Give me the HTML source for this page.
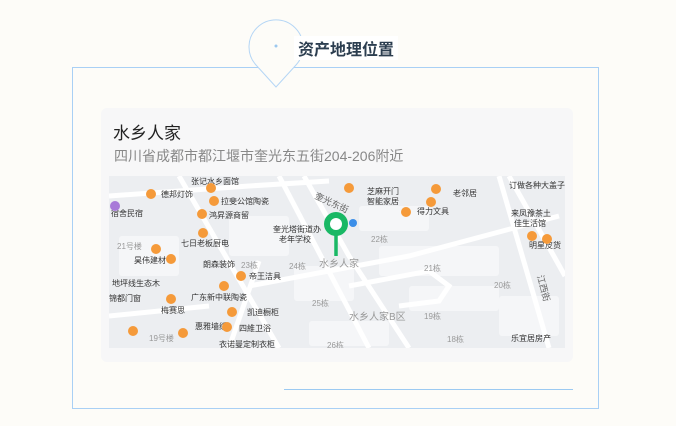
<!DOCTYPE html>
<html><head><meta charset="utf-8"><style>
body{margin:0;width:676px;height:426px;background:#fdfcf8;font-family:"Liberation Sans","Noto Sans CJK SC",sans-serif;position:relative;overflow:hidden}
.box{position:absolute;left:72px;top:67px;width:527px;height:342px;border:1px solid #a9d0f5;box-sizing:border-box}
.card{position:absolute;left:101px;top:108px;width:472px;height:254px;background:#f7f7f8;border-radius:6px}
.t{position:absolute;left:113px;top:119px;font-size:17px;color:#222}
.a{position:absolute;left:114px;top:146px;font-size:14px;color:#888}
.hd{position:absolute;left:294px;top:36px;font-size:16px;font-weight:bold;color:#2c3e50;background:#fff;padding:0 4px}
.bl{position:absolute;left:284px;top:389px;width:289px;height:1px;background:#9ccaf2}
svg text{font-family:"Liberation Sans","Noto Sans CJK SC",sans-serif}
</style></head><body>
<div class="box"></div>
<svg style="position:absolute;left:246px;top:16px" width="62" height="74">
<path d="M30 71 L10 49 A27 27 0 1 1 50 49 Z" fill="#fdfcf8" stroke="#b5d6f5" stroke-width="1"/>
<circle cx="30" cy="30" r="1.5" fill="#9cc8ef"/>
</svg>
<div class="hd">资产地理位置</div>
<div class="card"></div>
<div class="t">水乡人家</div>
<div class="a">四川省成都市都江堰市奎光东五街204-206附近</div>
<svg style="position:absolute;left:109px;top:176px" width="456" height="172" viewBox="0 0 456 172">
<rect width="456" height="172" fill="#eceef1"/>
<g fill="#f5f6f8">
<rect x="120" y="40" width="60" height="40" rx="3"/><rect x="10" y="60" width="60" height="40" rx="3"/>
<rect x="185" y="90" width="60" height="35" rx="3"/><rect x="270" y="70" width="120" height="30" rx="3"/>
<rect x="300" y="110" width="90" height="25" rx="3"/><rect x="200" y="145" width="80" height="25" rx="3"/>
<rect x="390" y="120" width="60" height="40" rx="3"/><rect x="250" y="30" width="70" height="25" rx="3"/>
</g>
<g stroke="#ffffff" fill="none" stroke-width="5">
<path d="M0 20 L140 10 L220 5"/><path d="M70 0 L170 172"/><path d="M170 0 L260 172"/>
<path d="M195 0 L240 80 L300 172"/><path d="M140 110 L300 80 L450 40"/>
<path d="M150 85 L120 172"/><path d="M390 0 L440 172"/><path d="M400 0 L456 100"/>
<path d="M290 130 L330 125 L340 110 L320 95 L240 110"/><path d="M0 140 L100 130"/>
</g>
<g font-size="8" fill="#333">
<text x="52" y="21">德邦灯饰</text><text x="112" y="28">拉斐公馆陶瓷</text><text x="100" y="42">鸿昇源商留</text>
<text x="72" y="70">七日老板厨电</text><text x="25" y="87">昊伟建材</text><text x="94" y="91">朗森装饰</text>
<text x="140" y="103">帝王洁具</text><text x="3" y="110">地坪线生态木</text><text x="0" y="125">锦都门窗</text>
<text x="82" y="124">广东新中联陶瓷</text><text x="52" y="137">梅赛思</text><text x="138" y="139">凯迪橱柜</text>
<text x="86" y="153">惠雅墙纸</text><text x="130" y="155">四維卫浴</text><text x="110" y="171">衣诺曼定制衣柜</text>
<text x="2" y="40">宿舍民宿</text><text x="164" y="56">奎光塔街道办</text><text x="170" y="66">老年学校</text>
<text x="258" y="18">芝麻开门</text><text x="258" y="28">智能家居</text><text x="308" y="38">得力文具</text><text x="344" y="20">老邻居</text>
<text x="400" y="12">订做各种大盖子</text><text x="402" y="40">来凤豫茶土</text><text x="405" y="50">佳生活馆</text>
<text x="420" y="72">明星皮货</text><text x="402" y="165">乐宜居房产</text><text x="82" y="8">张记水乡面馆</text>
</g>
<g font-size="8" fill="#999">
<text x="8" y="73">21号楼</text><text x="132" y="92">23栋</text><text x="180" y="93">24栋</text><text x="210" y="91" font-size="10">水乡人家</text>
<text x="203" y="130">25栋</text><text x="262" y="66">22栋</text><text x="315" y="95">21栋</text><text x="385" y="112">20栋</text>
<text x="240" y="144" font-size="10">水乡人家B区</text><text x="315" y="143">19栋</text><text x="338" y="166">18栋</text>
<text x="218" y="172">26栋</text><text x="40" y="165">19号楼</text>
</g>
<g fill="#f59a3a">
<circle cx="42" cy="18" r="5"/><circle cx="105" cy="25" r="5"/><circle cx="93" cy="38" r="5"/><circle cx="94" cy="57" r="5"/>
<circle cx="47" cy="73" r="5"/><circle cx="132" cy="100" r="5"/><circle cx="115" cy="110" r="5"/><circle cx="62" cy="123" r="5"/>
<circle cx="123" cy="136" r="5"/><circle cx="118" cy="151" r="5"/><circle cx="74" cy="157" r="5"/><circle cx="24" cy="155" r="5"/>
<circle cx="62" cy="83" r="5"/><circle cx="102" cy="12" r="5"/><circle cx="240" cy="12" r="5"/><circle cx="297" cy="36" r="5"/>
<circle cx="322" cy="26" r="5"/><circle cx="327" cy="13" r="5"/><circle cx="423" cy="60" r="5"/><circle cx="438" cy="63" r="5"/>
</g>
<circle cx="6" cy="30" r="5" fill="#a87ad8"/><circle cx="244" cy="47" r="4" fill="#3b8ee8"/>
<text x="205" y="22" font-size="9" fill="#666" transform="rotate(25 205 22)">奎光东街</text>
<text x="428" y="100" font-size="9" fill="#666" transform="rotate(75 428 100)">江西街</text>
<line x1="227" y1="48" x2="227" y2="80" stroke="#19b865" stroke-width="3.5"/>
<circle cx="227" cy="48" r="12" fill="#19b865"/><circle cx="227" cy="48" r="6" fill="#fff"/>
</svg>
<div class="bl"></div>
</body></html>
